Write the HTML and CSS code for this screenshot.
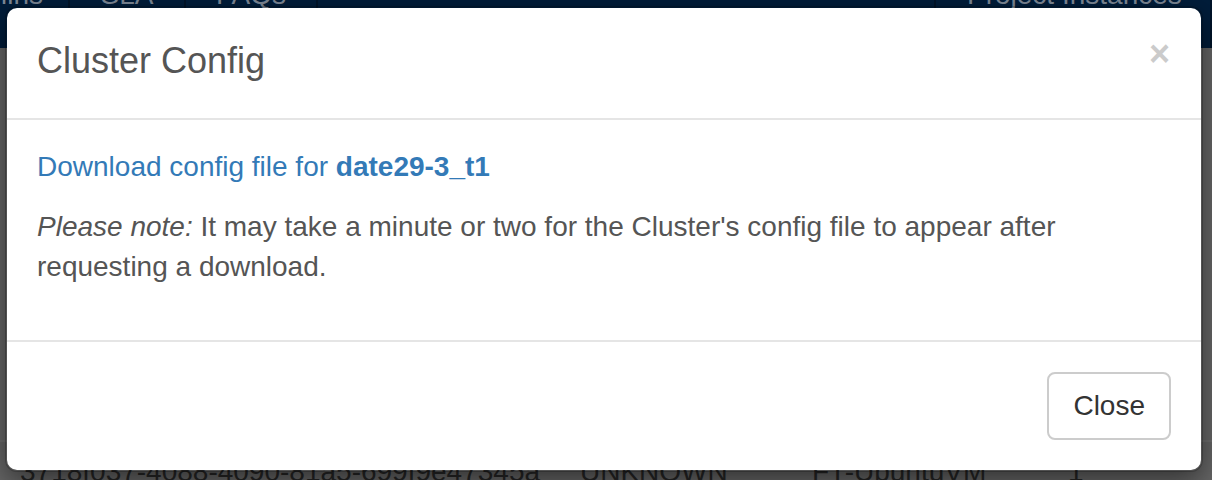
FILE: index.html
```html
<!DOCTYPE html>
<html>
<head>
<meta charset="utf-8">
<link rel="stylesheet" href="styles.css">
</head>
<body>
<div class="page">
  <nav class="navbar">
    <div class="nav-item first"><span>Admins</span></div>
    <div class="nav-item sla"><span>SLA</span></div>
    <div class="nav-item faqs"><span>FAQs</span></div>
    <div class="nav-fill"></div>
    <div class="nav-item proj"><span>Project Instances</span></div>
  </nav>
  <main class="content">
    <div class="table-row">
      <span class="cell c1">3718f037-4088-4090-81a5-699f9e47345a</span>
      <span class="cell c2">UNKNOWN</span>
      <span class="cell c3">FT-UbuntuVM</span>
      <span class="cell c4">1</span>
    </div>
  </main>
</div>

<div class="modal">
  <div class="modal-header">
    <h4 class="modal-title">Cluster Config</h4>
    <button class="close" type="button">×</button>
  </div>
  <div class="modal-body">
    <p><a class="dl" href="#">Download config file for <b>date29-3_t1</b></a></p>
    <p><em>Please note:</em> It may take a minute or two for the Cluster's config file to appear after requesting a download.</p>
  </div>
  <div class="modal-footer">
    <button class="btn" type="button">Close</button>
  </div>
</div>
</body>
</html>
```

FILE: styles.css
```css
html, body {
  margin: 0;
  padding: 0;
  width: 1212px;
  height: 480px;
  overflow: hidden;
  background: #676767;
  font-family: "Liberation Sans", Arial, sans-serif;
}

.page {
  margin-top: -30px;
}

.navbar {
  display: flex;
  height: 78px;
  background: #001d3b;
  color: #7f8a98;
  font-size: 28px;
  line-height: 40px;
}

.nav-item {
  display: flex;
  padding-top: 5px;
  border-right: 2px solid #00142a;
  white-space: nowrap;
  overflow: hidden;
}

.nav-item.first {
  width: 68px;
  justify-content: flex-end;
}
.nav-item.first span {
  margin-right: 25px;
}

.nav-item.sla {
  width: 114px;
  justify-content: center;
}
.nav-item.faqs {
  width: 130px;
  justify-content: center;
}

.nav-fill {
  flex: 1;
  border-right: 2px solid #00142a;
}

.nav-item.proj {
  width: 276px;
  justify-content: flex-start;
  padding-left: 31px;
  box-sizing: border-box;
  border-right: 2px solid #00142a;
}

.content {
  padding-top: 392px;
}

.table-row {
  display: flex;
  border-top: 2px solid #707070;
  padding-top: 10px;
  font-size: 28px;
  line-height: 40px;
  color: #262626;
  white-space: nowrap;
}

.cell.c1 { margin-left: 20px; width: 560px; }
.cell.c2 { width: 232px; }
.cell.c3 { width: 256px; }

.modal {
  position: absolute;
  left: 5px;
  top: 6px;
  width: 1198px;
  box-sizing: border-box;
  background: #fff;
  border: 2px solid rgba(0, 0, 0, 0.2);
  border-radius: 12px;
  box-shadow: 0 10px 30px rgba(0, 0, 0, 0.5);
  background-clip: padding-box;
}

.modal-header {
  display: flex;
  align-items: flex-start;
  padding: 27px 30px 32px;
  border-bottom: 2px solid #e5e5e5;
}

.modal-title {
  flex: 1;
  margin: 0;
  font-size: 36px;
  font-weight: normal;
  line-height: 51px;
  color: #555;
}

.close {
  margin-top: 1px;
  margin-right: 1px;
  padding: 0;
  border: 0;
  background: transparent;
  font-family: "Liberation Sans", Arial, sans-serif;
  font-size: 36px;
  font-weight: bold;
  line-height: 1;
  color: #000;
  opacity: 0.2;
  cursor: pointer;
}

.modal-body {
  padding: 27px 30px 33px;
  font-size: 28px;
  line-height: 40px;
  color: #555;
}

.modal-body p {
  margin: 0 0 20px;
}

.dl {
  color: #337ab7;
  text-decoration: none;
}

.modal-footer {
  display: flex;
  justify-content: flex-end;
  padding: 30px;
  border-top: 2px solid #e5e5e5;
}

.btn {
  padding: 12px 24px;
  font-family: "Liberation Sans", Arial, sans-serif;
  font-size: 28px;
  line-height: 40px;
  color: #333;
  background: #fff;
  border: 2px solid #ccc;
  border-radius: 8px;
}
```
